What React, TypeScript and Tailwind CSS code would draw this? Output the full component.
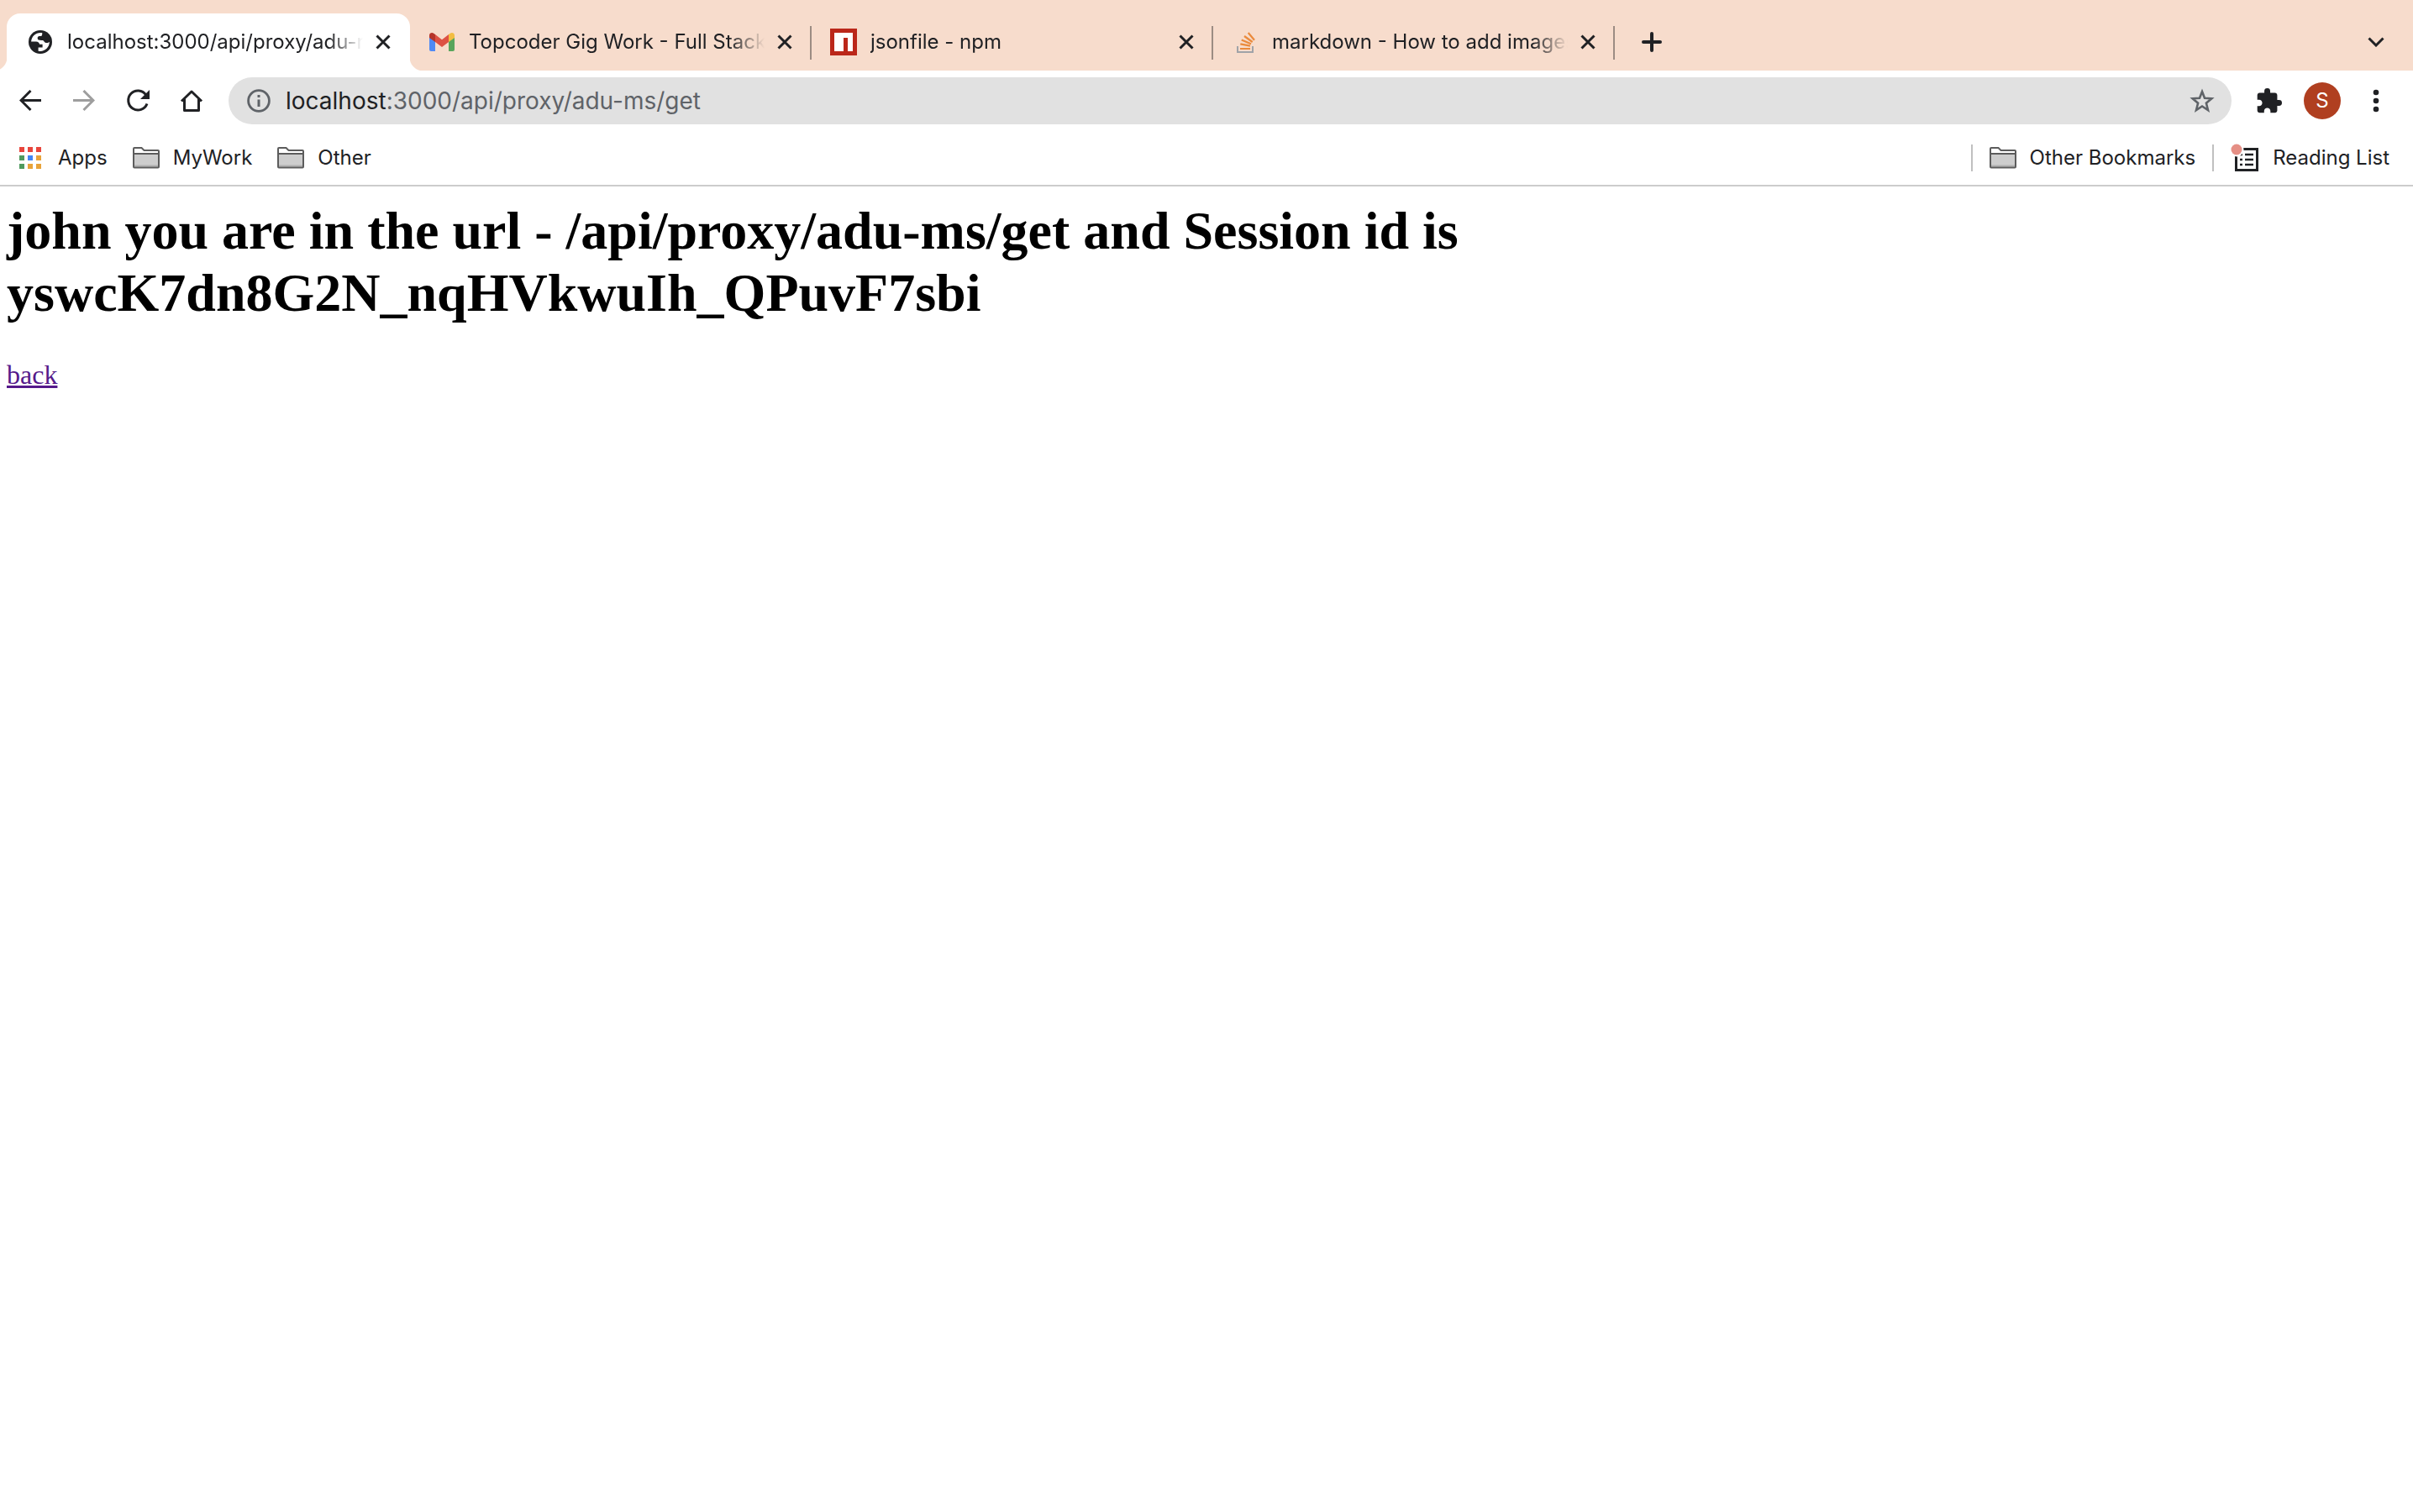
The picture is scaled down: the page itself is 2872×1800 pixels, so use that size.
import React from 'react';

type TabProps = {
  title: string;
  icon: React.ReactNode;
  active?: boolean;
};

function CloseIcon() {
  return (
    <svg viewBox="0 0 18 18" className="size-[18px]" fill="none" stroke="#202124" strokeWidth="3" aria-hidden="true">
      <path d="M1.5 1.5 16.5 16.5M16.5 1.5 1.5 16.5" />
    </svg>
  );
}

function GlobeIcon() {
  return (
    <svg viewBox="0 0 28 28" className="size-7" aria-hidden="true">
      <circle cx="14" cy="14" r="14" fill="#202124" />
      <path
        d="M16.3 3.2C9.5 2 3.4 6.9 3.1 13.6H9c2.3 0 3.9 1.3 4 3.2h3.6v3.7h-5v4.2c6.8 1.5 13.2-3.7 13.3-10.9-1.1 1.2-3.4 1.6-5 .9-1.6-.7-1.4-2.500-3-2.700-2.600-.2-6 .4-6.200-2.200-.2-2.300 1.200-2.700 3.300-2.700 1.800 0 2.300-1.400 2.300-3.900z"
        fill="#fff"
      />
    </svg>
  );
}

function GmailIcon() {
  return (
    <svg viewBox="0 0 30 22" className="h-[22px] w-[30px]" aria-hidden="true">
      <path d="M0 6h7v16H2a2 2 0 0 1-2-2z" fill="#4f8af5" />
      <path d="M23 6h7v14a2 2 0 0 1-2 2h-5z" fill="#58a55c" />
      <path d="M7 2l8 6.200L23 2v9l-8 6-8-6z" fill="#dd5144" />
      <path d="M0 3.200C0 .4 3-.9 5.200.7L7 2v9L0 6z" fill="#b5342a" />
      <path d="M30 3.200C30 .4 27-.9 24.800.7L23 2v9l7-5z" fill="#f2bd42" />
    </svg>
  );
}

function NpmIcon() {
  return (
    <svg viewBox="0 0 32 32" className="size-8" aria-hidden="true">
      <path d="M0 0h32v32H0z" fill="#bb271a" />
      <path d="M5 5h22v22h-6V11h-5v16H5z" fill="#fff" />
    </svg>
  );
}

function StackOverflowIcon() {
  return (
    <svg viewBox="0 0 24 32" className="h-8 w-6" fill="none" strokeWidth="2.200" aria-hidden="true">
      <path d="M3 21v7h18v-7" stroke="#a0a3a8" strokeWidth="2" />
      <path d="M6 24h12M6.300 18.300 18 20.700M7.700 13.500 19 18.300M11 9l9.700 7M15.700 5 23 13.700" stroke="#ea8a3c" />
    </svg>
  );
}

function Tab({ title, icon, active = false }: TabProps) {
  return (
    <div
      className={
        active
          ? 'relative flex h-[68px] w-[480px] shrink-0 items-center rounded-t-2xl bg-white pl-6'
          : 'relative flex h-[68px] w-[478px] shrink-0 items-center pl-[22px]'
      }
    >
      {active && (
        <>
          <span className="absolute bottom-0 -left-4 size-4 bg-[radial-gradient(circle_at_0_0,transparent_16px,white_17px)]" />
          <span className="absolute -right-4 bottom-0 size-4 bg-[radial-gradient(circle_at_100%_0,transparent_16px,white_17px)]" />
        </>
      )}
      <span className="flex size-8 shrink-0 items-center justify-center">{icon}</span>
      <button
        type="button"
        className="ml-4 w-[352px] overflow-hidden text-left text-2xl whitespace-nowrap [mask-image:linear-gradient(to_right,black_310px,transparent_352px)]"
      >
        {title}
      </button>
      <button type="button" aria-label={`Close ${title}`} className="flex size-12 items-center justify-center">
        <CloseIcon />
      </button>
      {!active && <span className="absolute top-[15px] right-0 h-10 w-0.5 bg-[#9c8c83]" />}
    </div>
  );
}

function FolderIcon() {
  return (
    <svg viewBox="0 0 32 26" className="h-[26px] w-8" fill="none" stroke="#5c5c5c" strokeWidth="2" aria-hidden="true">
      <path d="M1 8h30v15a1 1 0 0 1-1 1H2a1 1 0 0 1-1-1z" fill="#cdcdcd" stroke="none" />
      <path d="M2 21.500h28v2H2z" fill="#b0b0b0" stroke="none" />
      <path d="M1 2a1 1 0 0 1 1-1h8.500l3 3H30a1 1 0 0 1 1 1v18.500a1 1 0 0 1-1 1H2a1 1 0 0 1-1-1zM1 8h30" />
    </svg>
  );
}

function Bookmark({ label, icon }: { label: string; icon: React.ReactNode }) {
  return (
    <button type="button" className="flex h-12 items-center gap-4 text-2xl whitespace-nowrap">
      {icon}
      {label}
    </button>
  );
}

const appColors = ['#e8453c', '#e8453c', '#e8453c', '#4f9a5e', '#4285f4', '#e8a33a', '#4f9a5e', '#e8a33a', '#e8a33a'];

function AppsIcon() {
  return (
    <svg viewBox="0 0 26 26" className="mr-1 size-[26px]" aria-hidden="true">
      {appColors.map((color, i) => (
        <rect key={i} x={(i % 3) * 10} y={Math.floor(i / 3) * 10} width="6" height="6" fill={color} />
      ))}
    </svg>
  );
}

function ReadingListIcon() {
  return (
    <svg viewBox="0 0 34 34" className="size-[34px]" aria-hidden="true">
      <path d="M6.500 6.500h25v25h-25z" fill="none" stroke="#202124" strokeWidth="3" />
      <path d="M11 13h3M11 19h3M11 25h3M17 13h10M17 19h10M17 25h10" stroke="#202124" strokeWidth="2.600" />
      <circle cx="7" cy="7" r="8.500" fill="#fff" />
      <circle cx="7" cy="7" r="6.500" fill="#e58f85" />
    </svg>
  );
}

const toolButton = 'flex size-16 items-center justify-center';

function Toolbar() {
  return (
    <div className="flex h-[72px] items-center pl-1">
      <button type="button" aria-label="Back" className={toolButton}>
        <svg viewBox="0 0 26 26" className="size-[26px]" fill="none" stroke="#202124" strokeWidth="3" aria-hidden="true">
          <path d="M26 12.500H2M13.500 1 2 12.500 13.500 24" />
        </svg>
      </button>
      <button type="button" aria-label="Forward" className={toolButton}>
        <svg viewBox="0 0 26 26" className="size-[26px]" fill="none" stroke="#9e9e9e" strokeWidth="3" aria-hidden="true">
          <path d="M0 12.500h24M12.500 1 24 12.500 12.500 24" />
        </svg>
      </button>
      <button type="button" aria-label="Reload" className={toolButton}>
        <svg viewBox="0 0 28 28" className="size-7" aria-hidden="true">
          <path d="M23.600 6.800A11.500 11.500 0 1 0 25 17.500" fill="none" stroke="#202124" strokeWidth="3" />
          <path d="M28 1v11H17z" fill="#202124" />
        </svg>
      </button>
      <button type="button" aria-label="Home" className={toolButton}>
        <svg
          viewBox="0 0 28 28"
          className="size-7"
          fill="none"
          stroke="#202124"
          strokeWidth="3"
          strokeLinejoin="round"
          aria-hidden="true"
        >
          <path d="M2 14.500 14 3l12 11.500M5.500 12v13.500h17V12" />
        </svg>
      </button>
      <div className="ml-3 flex h-14 min-w-0 flex-1 items-center rounded-full bg-[#e1e1e1] pl-[22px]">
        <button type="button" aria-label="View site information">
          <svg viewBox="0 0 28 28" className="size-7" fill="none" stroke="#5f6368" strokeWidth="2.800" aria-hidden="true">
            <circle cx="14" cy="14" r="12.400" />
            <path d="M14 12.500V21M14 7v3" strokeWidth="3" />
          </svg>
        </button>
        <a href="#" aria-label="Address" className="ml-[18px] flex-1 text-[28px] whitespace-nowrap text-[#5f6368]">
          <span className="text-[#202124]">localhost</span>:3000/api/proxy/adu-ms/get
        </a>
        <button type="button" aria-label="Bookmark this tab" className="mr-5">
          <svg viewBox="0 0 30 30" className="size-[30px]" fill="none" stroke="#5f6368" strokeWidth="2.600" aria-hidden="true">
            <path d="m15 4 3 7.800 8.300.5-6.400 5.400 2.100 8.300-7-4.500-7 4.500 2.100-8.300-6.400-5.400 8.300-.5z" />
          </svg>
        </button>
      </div>
      <button type="button" aria-label="Extensions" className="ml-7 flex w-[34px] items-center justify-center">
        <svg viewBox="1.500 1 21.500 21.500" className="size-[30px]" fill="#202124" aria-hidden="true">
          <path d="M20.500 11H19V7c0-1.100-.9-2-2-2h-4V3.500a2.500 2.500 0 0 0-5 0V5H4c-1.100 0-2 .9-2 2v3.800h1.500c1.500 0 2.700 1.200 2.700 2.700s-1.200 2.700-2.700 2.700H2V20c0 1.100.9 2 2 2h3.800v-1.500c0-1.500 1.200-2.700 2.700-2.700s2.700 1.200 2.700 2.700V22H17c1.100 0 2-.9 2-2v-4h1.500a2.500 2.500 0 0 0 0-5z" />
        </svg>
      </button>
      <button
        type="button"
        aria-label="Profile"
        className="ml-6 flex size-11 items-center justify-center rounded-full bg-[#b03f20] text-2xl text-white"
      >
        S
      </button>
      <button type="button" aria-label="Menu" className="mr-5 ml-[18px] flex size-12 items-center justify-center">
        <svg viewBox="0 0 8 28" className="h-7 w-2" fill="#202124" aria-hidden="true">
          <circle cx="4" cy="4" r="3.300" />
          <circle cx="4" cy="14" r="3.300" />
          <circle cx="4" cy="24" r="3.300" />
        </svg>
      </button>
    </div>
  );
}

export default function App() {
  return (
    <div className="min-h-screen bg-white font-['Inter',sans-serif] text-[#202124]">
      <header className="border-b-2 border-[#cccccc]">
        <div className="flex h-[84px] items-end bg-[#f7dccc] pl-2">
          <Tab active title="localhost:3000/api/proxy/adu-ms/get" icon={<GlobeIcon />} />
          <Tab title="Topcoder Gig Work - Full Stack" icon={<GmailIcon />} />
          <Tab title="jsonfile - npm" icon={<NpmIcon />} />
          <Tab title="markdown - How to add images" icon={<StackOverflowIcon />} />
          <button type="button" aria-label="New tab" className="ml-5 flex h-[68px] w-12 items-center justify-center">
            <svg viewBox="0 0 24 24" className="size-6" fill="none" stroke="#202124" strokeWidth="4" strokeLinecap="round" aria-hidden="true">
              <path d="M2 12h20M12 2v20" />
            </svg>
          </button>
          <button type="button" aria-label="Search tabs" className="mr-5 ml-auto flex h-[68px] w-12 items-center justify-center">
            <svg viewBox="0 0 20 12" className="h-3 w-5" fill="none" stroke="#202124" strokeWidth="3" aria-hidden="true">
              <path d="m1.500 1.500 8.500 8.500 8.500-8.500" />
            </svg>
          </button>
        </div>
        <Toolbar />
        <nav aria-label="Bookmarks" className="flex h-16 items-center justify-between pr-7 pl-[23px]">
          <div className="flex items-center gap-[30px]">
            <Bookmark label="Apps" icon={<AppsIcon />} />
            <Bookmark label="MyWork" icon={<FolderIcon />} />
            <Bookmark label="Other" icon={<FolderIcon />} />
          </div>
          <div className="flex items-center gap-5">
            <span className="h-8 w-0.5 bg-[#c0c0c0]" />
            <Bookmark label="Other Bookmarks" icon={<FolderIcon />} />
            <span className="h-8 w-0.5 bg-[#c0c0c0]" />
            <Bookmark label="Reading List" icon={<ReadingListIcon />} />
          </div>
        </nav>
      </header>
      <main className="px-2 pt-4 font-['Liberation_Serif',serif] text-black">
        <h1 className="text-[64px] leading-[74px] font-bold">
          john you are in the url - /api/proxy/adu-ms/get and Session id is
          <br />
          yswcK7dn8G2N_nqHVkwuIh_QPuvF7sbi
        </h1>
        <a href="#" className="mt-[42px] inline-block text-[32px] leading-9 text-[#551a8b] underline">
          back
        </a>
      </main>
    </div>
  );
}
